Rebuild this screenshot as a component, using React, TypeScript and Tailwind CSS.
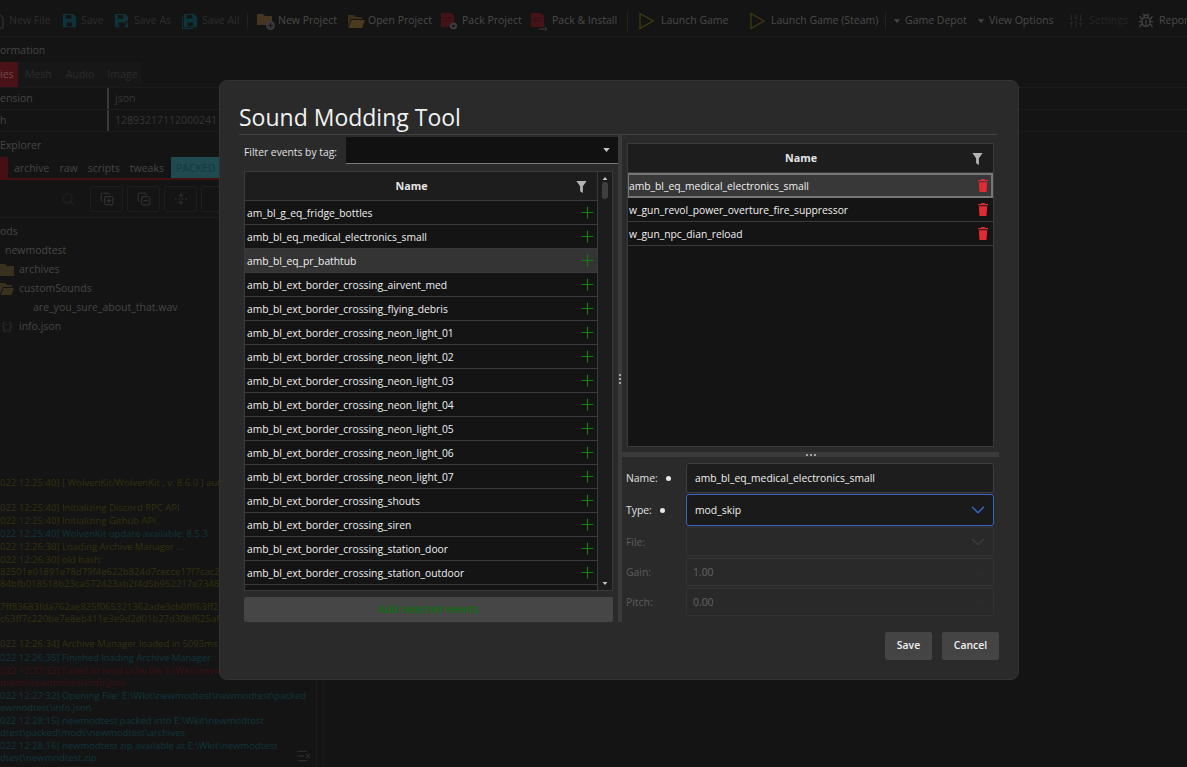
import { Plus, ChevronDown, ChevronUp, Bug, SlidersVertical, Search, CopyPlus, CopyMinus, FoldVertical, ListX } from "lucide-react";
import type { ReactNode } from "react";

const leftEvents = [
  "am_bl_g_eq_fridge_bottles",
  "amb_bl_eq_medical_electronics_small",
  "amb_bl_eq_pr_bathtub",
  "amb_bl_ext_border_crossing_airvent_med",
  "amb_bl_ext_border_crossing_flying_debris",
  "amb_bl_ext_border_crossing_neon_light_01",
  "amb_bl_ext_border_crossing_neon_light_02",
  "amb_bl_ext_border_crossing_neon_light_03",
  "amb_bl_ext_border_crossing_neon_light_04",
  "amb_bl_ext_border_crossing_neon_light_05",
  "amb_bl_ext_border_crossing_neon_light_06",
  "amb_bl_ext_border_crossing_neon_light_07",
  "amb_bl_ext_border_crossing_shouts",
  "amb_bl_ext_border_crossing_siren",
  "amb_bl_ext_border_crossing_station_door",
  "amb_bl_ext_border_crossing_station_outdoor",
  "amb_bl_ext_border_crossing_station_vent",
];

const rightEvents = [
  "amb_bl_eq_medical_electronics_small",
  "w_gun_revol_power_overture_fire_suppressor",
  "w_gun_npc_dian_reload",
];

const yellow = "text-[#35320e]";
const teal = "text-[#10363e]";
const red = "text-[#410f13]";

const logLines = [
  { text: "022 12:25:40] [ WolvenKit/WolvenKit , v: 8.6.0 ] auto", color: yellow, cls: "h-[25px]" },
  { text: "022 12:25:40] Initializing Discord RPC API", color: yellow, cls: "h-[13px]" },
  { text: "022 12:25:40] Initializing Github API", color: yellow, cls: "h-[13px]" },
  { text: "022 12:25:40] WolvenKit update available: 8.5.3", color: teal, cls: "h-[13px]" },
  { text: "022 12:26:30] Loading Archive Manager ...", color: yellow, cls: "h-[13px]" },
  { text: "022 12:26:30] old hash:", color: yellow, cls: "h-[12px]" },
  { text: "82501e01891e78d79f4e622b824d7cecce17f7cac28", color: yellow, cls: "h-[12px]" },
  { text: "84bfb018518b23ca572423ab2f4d5b952217e73486", color: yellow, cls: "h-[23px]" },
  { text: "7ff83683fda762ae825f065321362ade3cb0fff63ff22", color: yellow, cls: "h-[12px]" },
  { text: "c63ff7c220be7e8eb411e3e9d2d01b27d30bf625afa", color: yellow, cls: "h-[25px]" },
  { text: "022 12:26:34] Archive Manager loaded in 5093ms", color: yellow, cls: "h-[14px]" },
  { text: "022 12:26:35] Finished loading Archive Manager.", color: teal, cls: "h-[13px]" },
  { text: "022 12:27:32] Failed to read cr2w file E:\\Wkit\\newmodtest", color: red, cls: "h-[12px]" },
  { text: "mods\\newmodtest\\info.json", color: red, cls: "h-[13px]" },
  { text: "022 12:27:32] Opening File: E:\\Wkit\\newmodtest\\newmodtest\\packed", color: teal, cls: "h-[12px]" },
  { text: "ewmodtest\\info.json", color: teal, cls: "h-[13px]" },
  { text: "022 12:28:15] newmodtest packed into E:\\Wkit\\newmodtest", color: teal, cls: "h-[12px]" },
  { text: "dtest\\packed\\mods\\newmodtest\\archives", color: teal, cls: "h-[13px]" },
  { text: "022 12:28:16] newmodtest zip available at E:\\Wkit\\newmodtest", color: teal, cls: "h-[12px]" },
  { text: "dtest\\newmodtest.zip", color: teal, cls: "h-[13px]" },
];

function Funnel({ className }: { className?: string }) {
  return (
    <svg viewBox="0 0 12 14" className={className} fill="currentColor">
      <path d="M0 0h12L7.6 6.2V14L4.4 12V6.2z" />
    </svg>
  );
}

function Caret({ className }: { className?: string }) {
  return (
    <svg viewBox="0 0 8 5" className={className} fill="currentColor">
      <path d="M0 0h8L4 5z" />
    </svg>
  );
}

function Floppy({ check, stack }: { check?: boolean; stack?: boolean }) {
  return (
    <svg viewBox="0 0 16 16" className="w-[15px] h-[15px] shrink-0 text-[#0f333a]" fill="currentColor">
      {stack && <path d="M0 3h1v12h11v1H0z" />}
      <path d="M2 0h11l3 3v11H2z" />
      <path d="M5 1h6v4H5zM6 9h6v4H6z" fill="#141414" />
      {check && <path d="M7 13l2-2 2 1 4-5 1 1-5 7-3-1z" fill="#141414" />}
    </svg>
  );
}

function FolderBadge() {
  return (
    <svg viewBox="0 0 19 19" className="w-[19px] h-[19px] shrink-0">
      <path d="M0 2h6l2 2h7v9H0z" fill="#44361f" />
      <circle cx="13.5" cy="13.5" r="4.5" fill="#3a3a3a" />
      <path d="M11 13.5h5M13.5 11v5" stroke="#141414" strokeWidth="1.2" />
    </svg>
  );
}

function OpenFolder() {
  return (
    <svg viewBox="0 0 19 19" className="w-[19px] h-[19px] shrink-0">
      <path d="M1 3h6l2 2h6v2H4l-3 8z" fill="#3c3018" />
      <path d="M4.500 8H18l-3 8H1.500z" fill="#4a3b1e" />
    </svg>
  );
}

function PackIcon({ arrow }: { arrow?: boolean }) {
  return (
    <svg viewBox="0 0 17 19" className="w-[17px] h-[19px] shrink-0">
      <path d="M0 1h10l3 3v11H0z" fill="#451317" />
      <path d="M2 6h8M2 9h6" stroke="#2a1012" strokeWidth="1" />
      {arrow ? (
        <path d="M8 17h8M13.500 14.500 16 17l-2.500 2.500" fill="none" stroke="#3a3a3a" strokeWidth="1" />
      ) : (
        <>
          <circle cx="12.500" cy="14" r="3.600" fill="#3a3a3a" />
          <circle cx="12.500" cy="14" r="1.300" fill="#141414" />
        </>
      )}
    </svg>
  );
}

function PlayOutline() {
  return (
    <svg viewBox="0 0 15 18" className="w-[15px] h-[18px] shrink-0" fill="none" stroke="#3f3a12" strokeWidth="1.3">
      <path d="M1 1.500 14 9 1 16.500z" />
    </svg>
  );
}

function Dots({ vertical }: { vertical?: boolean }) {
  return (
    <div className={vertical ? "flex flex-col gap-[2px]" : "flex gap-[2px]"}>
      <div className="w-[2px] h-[2px] rounded-full bg-[#c8c8c8]" />
      <div className="w-[2px] h-[2px] rounded-full bg-[#c8c8c8]" />
      <div className="w-[2px] h-[2px] rounded-full bg-[#c8c8c8]" />
    </div>
  );
}

function TableHeader() {
  return (
    <div className="relative h-[29px] shrink-0 flex items-center justify-center pr-[19px] pt-[1px] bg-[#1d1d1d] border-b border-[#3a3a3a] text-[10.7px] font-bold text-[#e6e6e6]">
      Name
      <Funnel className="absolute right-[10px] top-[9px] w-[11px] h-[12px] text-[#b4b4b4]" />
    </div>
  );
}

function Toolbar() {
  return (
    <div className="h-[37px] shrink-0 border-b border-[#1b1b1b] flex items-center pt-[6px] text-[10.5px] text-[#4a4a4a] whitespace-nowrap -ml-[10px]">
      <div className="w-[71px] shrink-0 flex items-center gap-[5px] text-[#2e2e2e]">
        <svg viewBox="0 0 14 16" className="w-[14px] h-[16px] shrink-0" fill="none" stroke="#2c2c2c" strokeWidth="1.500">
          <path d="M1 1h8l4 4v10H1z" />
        </svg>
        <span>New File</span>
      </div>
      <div className="w-[52px] shrink-0 flex items-center gap-[5px] text-[#2e2e2e]">
        <Floppy />
        <span>Save</span>
      </div>
      <div className="w-[69px] shrink-0 flex items-center gap-[6px] text-[#2e2e2e]">
        <Floppy check />
        <span>Save As</span>
      </div>
      <div className="w-[66px] shrink-0 flex items-center gap-[5px] border-r border-[#222222] mr-[9px] text-[#2e2e2e]">
        <Floppy stack />
        <span>Save All</span>
      </div>
      <div className="w-[90px] shrink-0 flex items-center gap-[2px]">
        <FolderBadge />
        <span>New Project</span>
      </div>
      <div className="w-[94px] shrink-0 flex items-center gap-[2px]">
        <OpenFolder />
        <span>Open Project</span>
      </div>
      <div className="w-[90px] shrink-0 flex items-center gap-[4px]">
        <PackIcon />
        <span>Pack Project</span>
      </div>
      <div className="w-[97px] shrink-0 flex items-center gap-[4px] border-r border-[#222222]">
        <PackIcon arrow />
        <span>Pack &amp; Install</span>
      </div>
      <div className="w-[111px] shrink-0 ml-[11px] flex items-center gap-[7px]">
        <PlayOutline />
        <span>Launch Game</span>
      </div>
      <div className="w-[136px] shrink-0 flex items-center gap-[6px] border-r border-[#222222]">
        <PlayOutline />
        <span>Launch Game (Steam)</span>
      </div>
      <div className="w-[84px] shrink-0 ml-[8px] flex items-center gap-[5px]">
        <Caret className="w-[6px] h-[4px] text-[#464646]" />
        <span>Game Depot</span>
      </div>
      <div className="w-[90px] shrink-0 flex items-center gap-[5px]">
        <Caret className="w-[6px] h-[4px] text-[#464646]" />
        <span>View Options</span>
      </div>
      <div className="w-[70px] shrink-0 flex items-center gap-[5px] text-[#262626]">
        <SlidersVertical className="w-[16px] h-[16px] shrink-0" />
        <span>Settings</span>
      </div>
      <div className="flex items-center gap-[5px]">
        <Bug className="w-[16px] h-[16px] shrink-0 text-[#404040]" />
        <span>Report</span>
      </div>
    </div>
  );
}

function InfoPanel() {
  return (
    <div className="shrink-0 text-[10.5px] text-[#464646] whitespace-nowrap">
      <div className="h-[25px] flex items-center">
        <span className="translate-y-[1px]">ormation</span>
      </div>
      <div className="h-[25px] flex w-[141px] bg-[#171717] items-center text-[#2c2c2c]">
        <div className="w-[18px] h-full bg-[#4a1216] flex items-center text-[#6e4a4c]">ies</div>
        <span className="ml-[7px]">Mesh</span>
        <span className="ml-[14px]">Audio</span>
        <span className="ml-[13px]">Image</span>
      </div>
      <div className="h-[23px] border-y border-[#1b1b1b] flex items-center">
        <span className="w-[107px] pt-[1px]">ension</span>
        <div className="w-[2px] h-full bg-[#3a3a3a]" />
        <span className="ml-[6px] pt-[1px] text-[#363636]">json</span>
      </div>
      <div className="h-[22px] border-b border-[#1b1b1b] flex items-center overflow-hidden">
        <span className="w-[107px] pt-[1px]">h</span>
        <div className="w-[2px] h-full bg-[#3a3a3a]" />
        <span className="ml-[6px] pt-[1px] text-[#363636]">12893217112000241</span>
      </div>
    </div>
  );
}

function ExplorerPanel() {
  return (
    <div className="w-[317px] h-[315px] shrink-0 border-r border-[#1c1c1c] text-[10.5px] text-[#464646] whitespace-nowrap">
      <div className="h-[25px] flex items-center pt-[2px]">Explorer</div>
      <div className="h-[23px] flex items-stretch border-b-2 border-[#451014]">
        <div className="w-[8px] bg-[#451014]" />
        <span className="ml-[6px] self-center pt-[2px]">archive</span>
        <span className="ml-[10px] self-center pt-[2px]">raw</span>
        <span className="ml-[10px] self-center pt-[2px]">scripts</span>
        <span className="ml-[10px] self-center pt-[2px]">tweaks</span>
        <div className="ml-[7px] w-[70px] bg-[#1f4a50] flex items-center pl-[5px] pt-[2px] text-[#123a42]">PACKED</div>
      </div>
      <div className="h-[38px] flex items-center border-b border-[#1c1c1c] pl-[61px] gap-[4px] text-[#3a3a3a]">
        <Search className="w-[14px] h-[14px] text-[#222222] mr-[11px] shrink-0" />
        <div className="w-[33px] h-[26px] shrink-0 border border-[#1e1e1e] rounded-[3px] flex items-center justify-center">
          <CopyPlus className="w-[14px] h-[14px]" strokeWidth={1.5} />
        </div>
        <div className="w-[33px] h-[26px] shrink-0 border border-[#1e1e1e] rounded-[3px] flex items-center justify-center">
          <CopyMinus className="w-[14px] h-[14px]" strokeWidth={1.5} />
        </div>
        <div className="w-[33px] h-[26px] shrink-0 border border-[#1e1e1e] rounded-[3px] flex items-center justify-center">
          <FoldVertical className="w-[14px] h-[14px]" strokeWidth={1.5} />
        </div>
        <div className="w-[33px] h-[26px] shrink-0 border border-[#1e1e1e] rounded-[3px]" />
      </div>
      <div className="pt-[4px] flex flex-col">
        <div className="h-[19px] flex items-center">ods</div>
        <div className="h-[19px] flex items-center pl-[5px]">newmodtest</div>
        <div className="h-[19px] flex items-center gap-[5px]">
          <svg viewBox="0 0 14 12" className="w-[14px] h-[12px] shrink-0" fill="#3a3020">
            <path d="M0 0h5l2 2h7v10H0z" />
          </svg>
          archives
        </div>
        <div className="h-[19px] flex items-center gap-[5px]">
          <svg viewBox="0 0 14 12" className="w-[14px] h-[12px] shrink-0" fill="#3a3020">
            <path d="M0 0h5l2 2h5v2H3L0 11zM3.500 5H14l-2.500 7H1z" />
          </svg>
          customSounds
        </div>
        <div className="h-[19px] flex items-center pl-[33px]">are_you_sure_about_that.wav</div>
        <div className="h-[19px] flex items-center gap-[5px]">
          <span className="w-[14px] text-center text-[#30343e]">{"{;}"}</span>
          info.json
        </div>
      </div>
    </div>
  );
}

function LogPanel() {
  return (
    <div className="relative w-[317px] flex-1 border-r border-[#1c1c1c] pt-[30px] text-[9.5px] leading-[12px] whitespace-nowrap">
      {logLines.map((line) => (
        <div key={line.text} className={`${line.cls} ${line.color}`}>
          {line.text}
        </div>
      ))}
      <ListX className="absolute right-[4px] bottom-[3px] w-[16px] h-[16px] text-[#2a2a2a]" />
    </div>
  );
}

function EventRow({ name, hover }: { name: string; hover?: boolean }) {
  return (
    <div className={`h-[24px] shrink-0 flex items-center justify-between pl-[2px] border-b border-[#3a3a3a] ${hover ? "bg-[#343434]" : ""}`}>
      <span className="text-[10.3px] pt-[2px] text-[#f0f0f0] whitespace-nowrap">{name}</span>
      <Plus className="w-[19px] h-[19px] text-[#0e800e]" strokeWidth={1.5} />
    </div>
  );
}

function LeftColumn() {
  return (
    <div className="w-[379px] shrink-0 flex flex-col">
      <div className="flex h-[27px] mt-[2px] ml-[5px]">
        <span className="w-[102px] text-[10.3px] text-[#e0e0e0] leading-[31px] whitespace-nowrap">Filter events by tag:</span>
        <div className="flex-1 bg-[#111111] border-b border-[#7a7a7a] flex items-center justify-end pr-[8px]">
          <Caret className="w-[7px] h-[4px] text-[#c8c8c8]" />
        </div>
      </div>
      <div className="flex h-[420px] mt-[7px] ml-[5px] w-[369px] border border-[#3a3a3a] bg-[#141414]">
        <div className="w-[353px] flex flex-col overflow-hidden border-r border-[#3a3a3a]">
          <TableHeader />
          {leftEvents.map((name) => (
            <EventRow key={name} name={name} hover={name === "amb_bl_eq_pr_bathtub"} />
          ))}
        </div>
        <div className="flex-1 bg-[#1c1c1c] flex flex-col items-center justify-between py-[5px]">
          <div className="flex flex-col items-center gap-[2px]">
            <Caret className="w-[6px] h-[3px] rotate-180 text-[#c8c8c8]" />
            <div className="w-[6px] h-[17px] rounded-[3px] bg-[#3f3f3f]" />
          </div>
          <Caret className="w-[6px] h-[3px] text-[#c8c8c8]" />
        </div>
      </div>
      <button className="mt-[6px] ml-[5px] w-[369px] h-[25px] rounded-[2px] bg-[#464646] text-[10.4px] text-[#0d6f0d] font-semibold">
        Add selected events
      </button>
    </div>
  );
}

function SelectedRow({ name, active }: { name: string; active?: boolean }) {
  return (
    <div className={active ? "h-[25px] shrink-0 -ml-[1px] flex items-center justify-between pr-[3px] bg-[#383838] border-2 border-[#777777]" : "h-[24px] shrink-0 flex items-center justify-between pl-[1px] pr-[5px] border-b border-[#3a3a3a]"}>
      <span className="text-[10.3px] pt-[2px] text-[#f0f0f0] whitespace-nowrap">{name}</span>
      <TrashSolid />
    </div>
  );
}

function TrashSolid() {
  return (
    <svg viewBox="0 0 10 13" className="w-[10px] h-[13px] text-[#e02b35]" fill="currentColor">
      <path d="M3.500 0h3l.5 1h3v1.300H0V1h3z" />
      <path d="M.8 3.200h8.400L8.500 13h-7z" />
    </svg>
  );
}

function FormRow({ label, h, dot, disabled, children }: { label: string; h: string; dot?: string; disabled?: boolean; children: ReactNode }) {
  return (
    <div className={`flex items-center ${h}`}>
      <div className={`w-[60px] shrink-0 flex items-center pt-[2px] text-[10.4px] ${disabled ? "text-[#5c5c5c]" : "text-[#e0e0e0]"}`}>
        {label}
        {dot && <div className={`w-[5px] h-[5px] rounded-full bg-[#e8e8e8] ${dot}`} />}
      </div>
      {children}
    </div>
  );
}

function RightColumn() {
  return (
    <div className="flex-1 flex flex-col">
      <div className="ml-[5px] mt-[8px] w-[367px] h-[304px] flex flex-col border border-[#3a3a3a] bg-[#141414] overflow-hidden">
        <TableHeader />
        {rightEvents.map((name, i) => (
          <SelectedRow key={name} name={name} active={i === 0} />
        ))}
      </div>
      <div className="mt-[5px] h-[5px] bg-[#3a3a3a] flex items-center justify-center">
        <Dots />
      </div>
      <div className="mt-[5px] ml-[4px] w-[368px] flex flex-col">
        <FormRow label="Name:" h="h-[31px]" dot="ml-[8px]">
          <div className="flex-1 h-[30px] bg-[#1d1d1d] border border-[#3f3f3f] rounded-[3px] flex items-center pl-[8px] pt-[2px] text-[10.3px] text-[#f0f0f0]">
            amb_bl_eq_medical_electronics_small
          </div>
        </FormRow>
        <FormRow label="Type:" h="h-[33px]" dot="ml-[8px]">
          <div className="flex-1 h-[32px] bg-[#1a1a1a] border border-[#3b63c4] rounded-[3px] flex items-center justify-between pl-[8px] pr-[4px] text-[10.4px] text-[#f0f0f0]">
            <span className="pt-[2px]">mod_skip</span>
            <ChevronDown className="w-[22px] h-[22px] text-[#3f68cc]" strokeWidth={1.5} />
          </div>
        </FormRow>
        <FormRow label="File:" h="h-[31px]" disabled>
          <div className="flex-1 h-[29px] bg-[#292929] border border-[#333333] rounded-[3px] flex items-center justify-end pr-[4px]">
            <ChevronDown className="w-[22px] h-[22px] text-[#3c3c3c]" strokeWidth={1.5} />
          </div>
        </FormRow>
        <FormRow label="Gain:" h="h-[30px]" disabled>
          <div className="flex-1 h-[28px] bg-[#292929] border border-[#333333] rounded-[3px] flex items-center justify-between pl-[6px] pr-[6px] pt-[2px] text-[10.4px] text-[#666666]">
            1.00
            <ChevronDown className="w-[16px] h-[16px] text-[#303030]" strokeWidth={1.5} />
          </div>
        </FormRow>
        <FormRow label="Pitch:" h="h-[30px]" disabled>
          <div className="flex-1 h-[28px] bg-[#292929] border border-[#333333] rounded-[3px] flex items-center justify-between pl-[6px] pr-[6px] pt-[2px] text-[10.4px] text-[#666666]">
            0.00
            <ChevronUp className="w-[16px] h-[16px] text-[#303030]" strokeWidth={1.5} />
          </div>
        </FormRow>
      </div>
    </div>
  );
}

function Dialog() {
  return (
    <div className="absolute left-[219px] top-[80px] w-[800px] h-[600px] rounded-[8px] bg-[#2a2a2a] border border-[#333333] px-[19px] flex flex-col">
      <div className="h-[54px] shrink-0 mr-[2px] border-b border-[#414141] flex items-end">
        <h1 className="text-[23px] leading-[34px] text-[#f2f2f2]">Sound Modding Tool</h1>
      </div>
      <div className="flex h-[487px] shrink-0">
        <LeftColumn />
        <div className="w-[4px] shrink-0 bg-[#3a3a3a] flex items-center justify-center">
          <Dots vertical />
        </div>
        <RightColumn />
      </div>
      <div className="flex justify-end gap-[10px] mt-[10px]">
        <button className="w-[47px] h-[28px] rounded-[2px] bg-[#444444] text-[10.4px] font-semibold text-[#f0f0f0]">Save</button>
        <button className="w-[57px] h-[28px] rounded-[2px] bg-[#444444] text-[10.4px] font-semibold text-[#f0f0f0]">Cancel</button>
      </div>
    </div>
  );
}

export default function App() {
  return (
    <div className="relative w-[1187px] h-[767px] overflow-hidden bg-[#141414] font-['Open_Sans',sans-serif]">
      <div className="h-full flex flex-col">
        <Toolbar />
        <InfoPanel />
        <div className="w-[324px] flex-1 min-h-0 flex flex-col border-r border-[#191919]">
          <ExplorerPanel />
          <LogPanel />
        </div>
      </div>
      <Dialog />
    </div>
  );
}
